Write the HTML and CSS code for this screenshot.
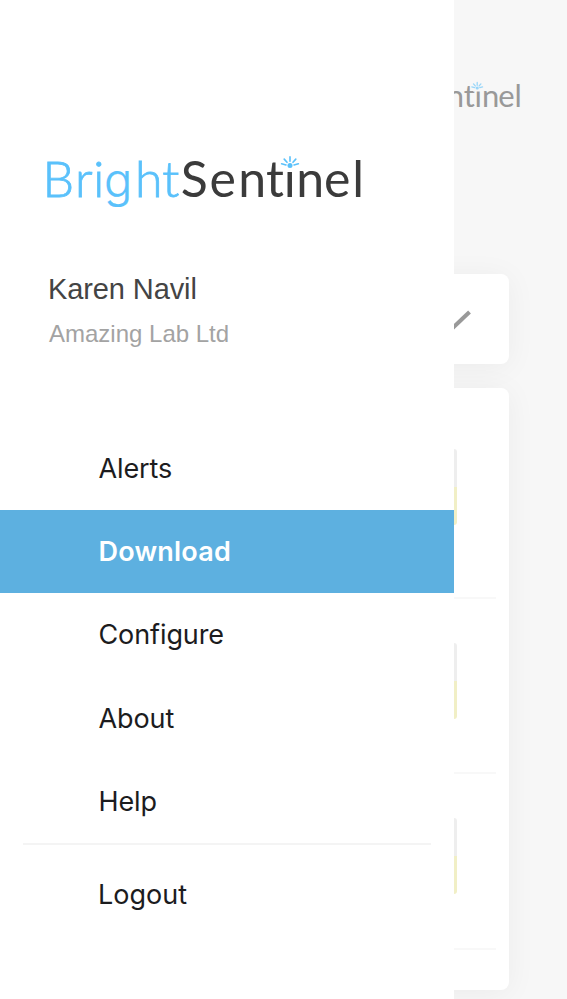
FILE: index.html
```html
<!DOCTYPE html>
<html lang="en">
<head>
  <meta charset="UTF-8" />
  <meta name="viewport" content="width=device-width, initial-scale=1.0"/>
  <title>BrightSentinel</title>
  <link rel="stylesheet" href="styles.css">
</head>
<body>
  <div class="screen">
    <main class="page">
      <div class="page-logo">
        <svg width="80" height="40" viewBox="0 0 80 40">
          <text class="page-logo-text" x="-3.2 13.7 24.6 32 48.3 64.6" y="34">ntinel</text>
          <rect class="page-logo-patch" x="23" y="7" width="10" height="11.5"/>
          <g class="sun" transform="translate(27.2 15) scale(.64)">
            <circle r="2.5"/>
            <path d="M-4-.6L-8.4-1.8M-3-3.2L-5.8-6.4M0-4.3V-8.6M3-3.2L5.8-6.4M4-.6L8.4-1.8"/>
          </g>
        </svg>
      </div>

      <div class="card card-device">
        <svg class="pencil" width="36" height="30" viewBox="0 0 36 30">
          <path d="M8 26.5L27.5 8"/>
        </svg>
      </div>

      <div class="card card-list">
        <div class="item"><span class="level"></span></div>
        <div class="item"><span class="level"></span></div>
        <div class="item"><span class="level"></span></div>
      </div>
    </main>

    <aside class="drawer">
      <svg class="logo" width="330" height="70" viewBox="0 0 330 70">
        <text class="logo-bright" x="2.6 35 53.3 64 95 122.3" y="52">Bri<tspan class="logo-g">g</tspan>ht</text>
        <text class="logo-sentinel" x="140.8 169.6 198.3 226 243.8 256.3 284 312.3" y="52">Sentinel</text>
        <rect class="logo-patch" x="243" y="8" width="14" height="19"/>
        <g class="sun" transform="translate(250 20.5)">
          <circle r="2.5"/>
          <path d="M-4-.6L-8.4-1.8M-3-3.2L-5.8-6.4M0-4.3V-8.6M3-3.2L5.8-6.4M4-.6L8.4-1.8"/>
        </g>
      </svg>

      <div class="user">
        <div class="user-name">Karen Navil</div>
        <div class="user-company">Amazing Lab Ltd</div>
      </div>

      <nav>
        <ul class="menu">
          <li><a href="#">Alerts</a></li>
          <li><a class="active" href="#">Download</a></li>
          <li><a href="#">Configure</a></li>
          <li><a href="#">About</a></li>
          <li><a href="#">Help</a></li>
          <li class="logout"><a href="#">Logout</a></li>
        </ul>
      </nav>
    </aside>
  </div>
</body>
</html>
```

FILE: styles.css
```css
* { margin: 0; padding: 0; box-sizing: border-box; }
body {
  font-family: Inter, sans-serif;
  background: #f7f7f7;
}
.screen {
  position: relative;
  width: 567px;
  height: 999px;
  overflow: hidden;
}

/* page behind the menu */
.page {
  display: flex;
  flex-direction: column;
  padding: 73px 58px 0;
}
.page-logo {
  height: 201px;
  display: flex;
  justify-content: flex-end;
  margin-right: -20px;
}
.page-logo svg {
  margin-right: -1px;
  overflow: visible;
}
.page-logo-text {
  font-family: Lato, sans-serif;
  font-size: 31px;
  fill: #999;
}
.page-logo-patch { fill: #f7f7f7; }
.page-logo .sun { opacity: 0.6; }
.page-logo .sun path { stroke-width: 2; }
.card {
  background: #fff;
  border-radius: 8px;
  box-shadow: 0 3px 30px rgba(0,0,0,0.05);
}
.card-device {
  height: 90px;
  margin-bottom: 24px;
  padding-right: 31px;
  display: flex;
  align-items: center;
  justify-content: flex-end;
}
.pencil {
  fill: none;
  stroke: #999;
  stroke-width: 4;
}
.card-list {
  height: 602px;
  padding: 34px 13px 0;
}
.item {
  height: 175.5px;
  border-bottom: 2px solid #f8f8f8;
  display: flex;
  justify-content: flex-end;
  padding: 44px 39.5px 0;
}
.item:first-child {
  height: 176.5px;
  padding-top: 27px;
}
.level {
  width: 12px;
  height: 76px;
  border-radius: 3px;
  background: linear-gradient(#eee 50%, #f1efc6 50%);
}

/* drawer */
.drawer {
  position: absolute;
  top: 0;
  left: 0;
  width: 453.5px;
  height: 100%;
  background: #fff;
  padding-top: 145px;
}
.logo {
  display: block;
  margin-left: 40px;
}
.logo text {
  font-family: Lato, sans-serif;
  font-size: 50px;
}
.logo-bright {
  fill: #5ac1fb;
  stroke: #5ac1fb;
  stroke-width: 0.8;
  font-weight: 300;
}
.logo-g {
  font-family: Inter, sans-serif;
  font-size: 47px;
  stroke-width: 0.2;
}
.logo-sentinel { fill: #3b3b3b; }
.logo-patch { fill: #fff; }
.sun { fill: #5ac1fb; }
.sun path {
  stroke: #5ac1fb;
  stroke-width: 1.6;
  stroke-linecap: round;
}
.user {
  height: 212px;
  padding: 54px 0 0 48px;
  font-family: "Liberation Sans", Arial, sans-serif;
}
.user-name {
  font-size: 29px;
  line-height: 40px;
  letter-spacing: -0.1px;
  color: #444;
}
.user-company {
  margin-top: 5px;
  padding-left: 1px;
  font-size: 24px;
  line-height: 40px;
  color: #a3a3a3;
}
.menu { list-style: none; }
.menu a {
  display: block;
  height: 83.2px;
  padding-left: 98.5px;
  line-height: 83.5px;
  font-size: 27px;
  letter-spacing: -0.1px;
  color: #1c1c1e;
  text-decoration: none;
}
.menu a.active {
  background: #5db0e0;
  color: #fff;
  font-weight: 600;
  letter-spacing: 0.2px;
}
.menu .logout {
  margin: 0 23px;
  padding-top: 8px;
  border-top: 2px solid #f4f4f4;
}
.menu .logout a {
  padding-left: 75px;
  letter-spacing: 0;
}
```
